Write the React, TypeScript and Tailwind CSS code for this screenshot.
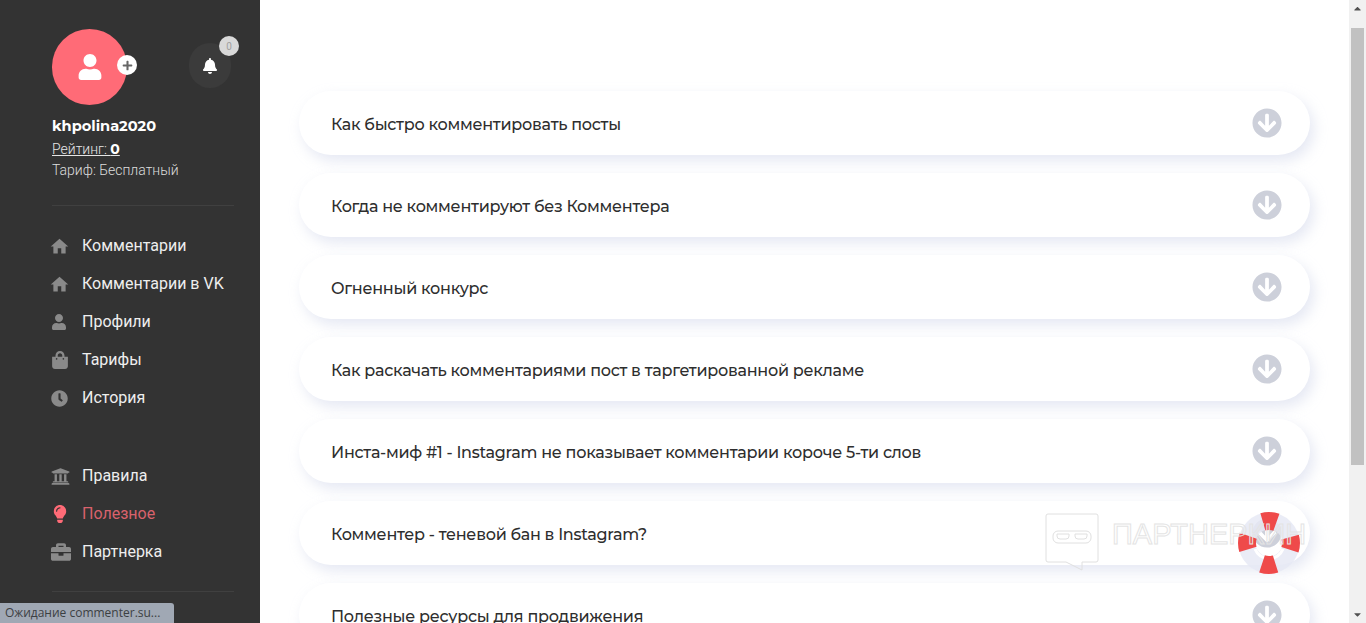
import { FaArrowCircleDown, FaBell, FaBriefcase, FaCaretDown, FaCaretUp, FaClock, FaLightbulb, FaPlus, FaShoppingBag, FaUniversity, FaUser } from 'react-icons/fa'
import { MdHome } from 'react-icons/md'
import type { ReactNode } from 'react'

const questions = [
  'Как быстро комментировать посты',
  'Когда не комментируют без Комментера',
  'Огненный конкурс',
  'Как раскачать комментариями пост в таргетированной рекламе',
  'Инста-миф #1 - Instagram не показывает комментарии короче 5-ти слов',
  'Комментер - теневой бан в Instagram?',
  'Полезные ресурсы для продвижения',
]

function NavItem({ icon, label, active }: { icon: ReactNode; label: string; active?: boolean }) {
  return (
    <div className={`flex h-[38px] items-center whitespace-nowrap text-[16px] ${active ? 'text-[#d9626c]' : 'text-[#eeeeee]'}`}>
      <span className={`-ml-[1px] flex w-[31px] shrink-0 items-center ${active ? 'text-[#ff6b77]' : 'text-[#8a8a8a]'}`}>{icon}</span>
      <span>{label}</span>
    </div>
  )
}

function Sidebar() {
  return (
    <aside className="flex h-full w-[260px] shrink-0 flex-col bg-[#333333] pl-[52px] pr-[26px] pt-[29px] font-['Roboto',sans-serif]">
      <div className="flex items-start">
        <div className="relative flex h-[76px] w-[75px] items-center justify-center rounded-full bg-[#ff6b77] text-white">
          <FaUser size={26} />
          <span className="absolute left-[65px] top-[26px] flex h-[20px] w-[20px] items-center justify-center rounded-full bg-white text-[#666666]">
            <FaPlus size={11} />
          </span>
        </div>
        <div className="relative ml-[62px] mt-[14px] flex h-[45px] w-[42px] items-center justify-center rounded-full bg-[#3b3b3b] text-white">
          <FaBell size={16} />
          <span className="absolute left-[30px] top-[-7px] flex h-[20px] w-[20px] items-center justify-center rounded-full bg-[#d9d9d9] text-[10px] text-[#a0a0a0]">0</span>
        </div>
      </div>
      <div className="mt-[11px] font-['Montserrat','Inter',sans-serif] text-[14.6px] font-bold leading-[20px] text-white">khpolina2020</div>
      <div className="mt-[3px] text-[14px] font-light leading-[20px] text-[#e6e6e6]">
        <span className="underline">Рейтинг: <b className="font-['Montserrat','Inter',sans-serif] font-bold text-white">0</b></span>
      </div>
      <div className="mt-[1px] text-[14px] font-light leading-[20px] text-[#dddddd]">Тариф: Бесплатный</div>
      <div className="mt-[25px] h-px bg-[#404040]" />
      <nav className="mt-[21px]">
        <NavItem icon={<MdHome size={21} className="-ml-[2px]" />} label="Комментарии" />
        <NavItem icon={<MdHome size={21} className="-ml-[2px]" />} label="Комментарии в VK" />
        <NavItem icon={<FaUser size={16} />} label="Профили" />
        <NavItem icon={<FaShoppingBag size={18} />} label="Тарифы" />
        <NavItem icon={<FaClock size={17} />} label="История" />
      </nav>
      <nav className="mt-[40px]">
        <NavItem icon={<FaUniversity size={19} />} label="Правила" />
        <NavItem icon={<FaLightbulb size={18} />} label="Полезное" active />
        <NavItem icon={<FaBriefcase size={20} />} label="Партнерка" />
      </nav>
      <div className="mt-[20px] h-px bg-[#404040]" />
    </aside>
  )
}

function Question({ text }: { text: string }) {
  return (
    <div className="flex h-[64px] shrink-0 items-center justify-between rounded-[32px] bg-white pl-[32px] pr-[28px] shadow-[4px_6px_14px_rgba(190,198,225,0.4)]">
      <span className="pt-[4px] font-['Montserrat','Inter',sans-serif] text-[16px] font-medium tracking-[-0.27px] text-[#2e2e2e]">{text}</span>
      <FaArrowCircleDown size={30} className="text-[#cdd0da]" />
    </div>
  )
}

function Scrollbar() {
  return (
    <div className="flex h-full w-[17px] shrink-0 flex-col items-center bg-[#f1f1f1] text-[#505050]">
      <div className="flex h-[17px] items-center justify-center"><FaCaretUp size={11} /></div>
      <div className="mt-[11px] h-[437px] w-[13px] bg-[#c1c1c1]" />
      <div className="mt-auto flex h-[17px] items-center justify-center"><FaCaretDown size={11} /></div>
    </div>
  )
}

function Watermark() {
  return (
    <div className="pointer-events-none absolute left-[1045px] top-[513px] flex items-start">
      <svg width="54" height="58" viewBox="0 0 54 58" fill="none" stroke="#e0e0e0" strokeWidth="1">
        <path d="M3 1h48a2 2 0 0 1 2 2v44a2 2 0 0 1-2 2H37v8L21 49H3a2 2 0 0 1-2-2V3a2 2 0 0 1 2-2z" />
        <rect x="8" y="18" width="38" height="12" rx="5" />
        <path d="M12 21h12v2a3 3 0 0 1-3 3h-6a3 3 0 0 1-3-3zM30 21h12v2a3 3 0 0 1-3 3h-6a3 3 0 0 1-3-3z" />
      </svg>
      <span className="ml-[13px] mt-[5px] font-['Liberation_Sans',sans-serif] text-[29px] leading-[32px] text-transparent [-webkit-text-stroke:1px_#e4e4e4]">ПАРТНЕРКИН</span>
    </div>
  )
}

function Lifebuoy() {
  return (
    <svg className="absolute left-[1238px] top-[512px]" width="62" height="62" viewBox="0 0 62 62" fill="none">
      <circle cx="31" cy="31" r="22" stroke="#e6e9f4" strokeWidth="17" opacity="0.85" />
      <path d="M17 37a15 15 0 0 0 28 0" stroke="#fff" strokeWidth="3" />
      <circle cx="31" cy="31" r="22" stroke="#ef4a4a" strokeWidth="18" strokeDasharray="13.8 20.75" strokeDashoffset="6.9" />
    </svg>
  )
}

export default function App() {
  return (
    <div className="relative flex h-[623px] w-[1366px] overflow-hidden bg-white">
      <Sidebar />
      <main className="flex min-w-0 flex-1 flex-col gap-[18px] overflow-hidden pl-[39px] pr-[39px] pt-[91px]">
        {questions.map((q) => <Question key={q} text={q} />)}
      </main>
      <Scrollbar />
      <Lifebuoy />
      <Watermark />
      <div className="absolute bottom-0 left-0 flex h-[20px] w-[174px] items-center rounded-tr-[3px] bg-[#a0a8b4] pl-[5px] font-['Open_Sans',sans-serif] text-[12px] text-[#3c4043]">Ожидание commenter.su...</div>
    </div>
  )
}
